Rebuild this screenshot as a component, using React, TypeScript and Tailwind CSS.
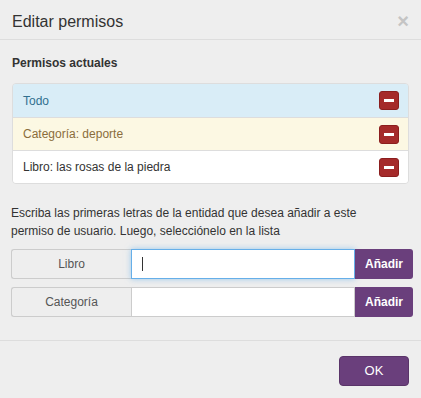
const rows = [
  { label: 'Todo', cls: 'bg-[#d9edf7] text-[#31708f]' },
  { label: 'Categoría: deporte', cls: 'bg-[#fcf8e3] text-[#8a6d3b]' },
  { label: 'Libro: las rosas de la piedra', cls: 'bg-white text-[#333]' },
];

function RemoveButton() {
  return (
    <button className="flex h-[19px] w-[20px] items-center justify-center rounded-[3px] border border-[#8b1e1e] bg-[#a52a2a]">
      <span className="block h-[3px] w-[10px] bg-white" />
    </button>
  );
}

function AddRow({ label, focused }: { label: string; focused?: boolean }) {
  return (
    <div className="flex h-[30px]">
      <div className="flex w-[120px] items-center justify-center rounded-l-[3px] border border-r-0 border-[#ccc] bg-[#eee] text-[12px] text-[#555]">
        {label}
      </div>
      <div
        className={`flex flex-1 items-center border bg-white px-[10px] ${
          focused ? 'border-[#66afe9] shadow-[0_0_6px_rgba(102,175,233,0.6)]' : 'border-[#ccc]'
        }`}
      >
        {focused && <span className="block h-[14px] w-px bg-[#333]" />}
      </div>
      <button className="w-[58px] rounded-r-[3px] bg-[#6a3f7c] text-[12px] font-bold text-white">Añadir</button>
    </div>
  );
}

export default function App() {
  return (
    <div className="h-[398px] w-[421px] bg-[#eeeeee] font-['Liberation_Sans',Arial,sans-serif] text-[#333]">
      <div className="flex h-[40px] items-center justify-between border-b border-[#ddd] px-[12px]">
        <h1 className="pt-[4px] text-[16px] leading-[20px]">Editar permisos</h1>
        <span className="pt-[2px] text-[20px] font-bold leading-none text-[#c4c4c4]">×</span>
      </div>

      <div className="pt-[15px]">
        <p className="px-[12px] text-[12px] font-bold leading-[16px]">Permisos actuales</p>

        <ul className="mx-[12px] mt-[12px] overflow-hidden rounded-[4px] border border-[#ddd]">
          {rows.map((r, i) => (
            <li
              key={r.label}
              className={`flex h-[33px] items-center justify-between pl-[10px] pr-[9px] text-[12px] ${r.cls} ${
                i > 0 ? 'border-t border-[#ddd]' : ''
              }`}
            >
              <span>{r.label}</span>
              <RemoveButton />
            </li>
          ))}
        </ul>

        <p className="mt-[20px] w-[372px] pl-[11px] text-[12px] leading-[18px]">
          Escriba las primeras letras de la entidad que desea añadir a este permiso de usuario. Luego, selecciónelo en la lista
        </p>

        <div className="ml-[11px] mr-[8px] mt-[9px] flex flex-col gap-[8px]">
          <AddRow label="Libro" focused />
          <AddRow label="Categoría" />
        </div>
      </div>

      <div className="mt-[23px] flex justify-end border-t border-[#ddd] px-[12px] pt-[15px]">
        <button className="h-[30px] w-[70px] rounded-[4px] border border-[#5a3469] bg-[#6a3f7c] text-[13px] text-white">
          OK
        </button>
      </div>
    </div>
  );
}
